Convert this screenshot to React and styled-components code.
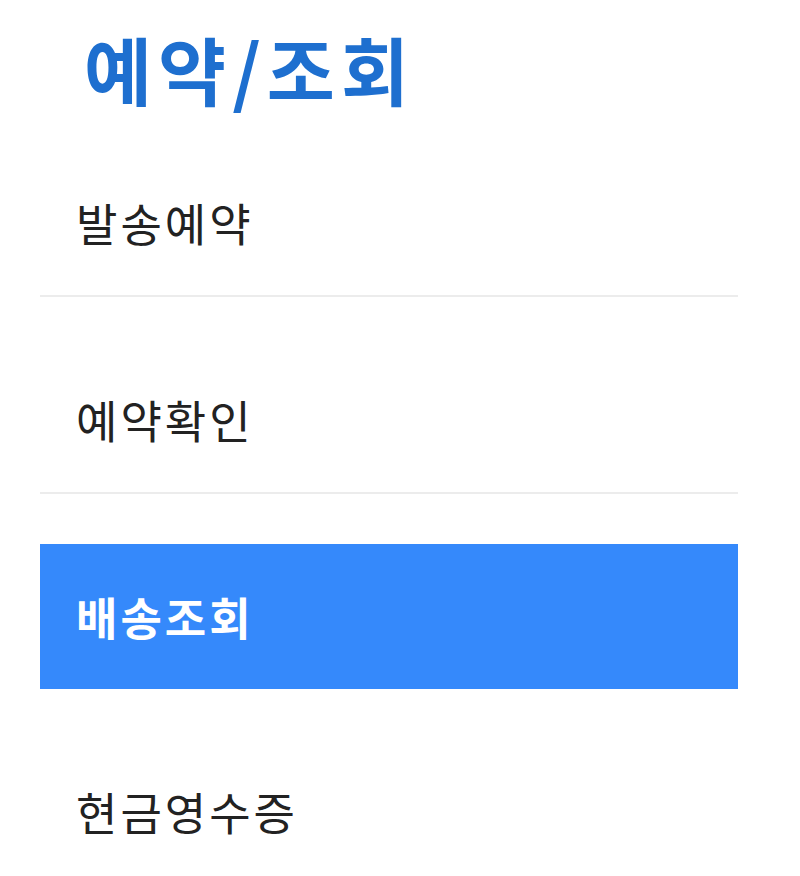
import React from "react";
import styled, { createGlobalStyle } from "styled-components";

const GlobalStyle = createGlobalStyle`
  body {
    margin: 0;
    background: #ffffff;
    font-family: "Noto Sans CJK KR", "Noto Sans", sans-serif;
  }
`;

const SideMenuStyled = styled.nav`
  width: 698px;
  margin-left: 40px;
`;

const TitleStyled = styled.h2`
  margin: 0;
  height: 150px;
  box-sizing: border-box;
  padding: 0 0 16px 44px;
  display: flex;
  align-items: center;
  font-size: 74px;
  font-weight: 700;
  color: #1e6fcf;
  letter-spacing: 6px;
`;

const MenuListStyled = styled.ul`
  list-style: none;
  margin: 0;
  padding: 0;
  display: flex;
  flex-direction: column;
  gap: 50px;
`;

const MenuItemStyled = styled.li`
  height: 145px;
  display: flex;
  align-items: center;
  padding-left: 36px;
  font-size: 45px;
  letter-spacing: 3px;
  font-weight: ${(props) => (props.$active ? 700 : 400)};
  color: ${(props) => (props.$active ? "#ffffff" : "#222222")};
  background-color: ${(props) => (props.$active ? "#3589fb" : "transparent")};
  border-bottom: ${(props) =>
    props.$active || props.$last ? "none" : "2px solid #ececec"};
`;

const menus = ["발송예약", "예약확인", "배송조회", "현금영수증"];

const App = () => {
  const current = 2;

  return (
    <>
      <GlobalStyle />
      <SideMenuStyled>
        <TitleStyled>예약/조회</TitleStyled>
        <MenuListStyled>
          {menus.map((n, i) => (
            <MenuItemStyled
              key={i}
              $active={i === current}
              $last={i === menus.length - 1}
            >
              {n}
            </MenuItemStyled>
          ))}
        </MenuListStyled>
      </SideMenuStyled>
    </>
  );
};

export default App;
